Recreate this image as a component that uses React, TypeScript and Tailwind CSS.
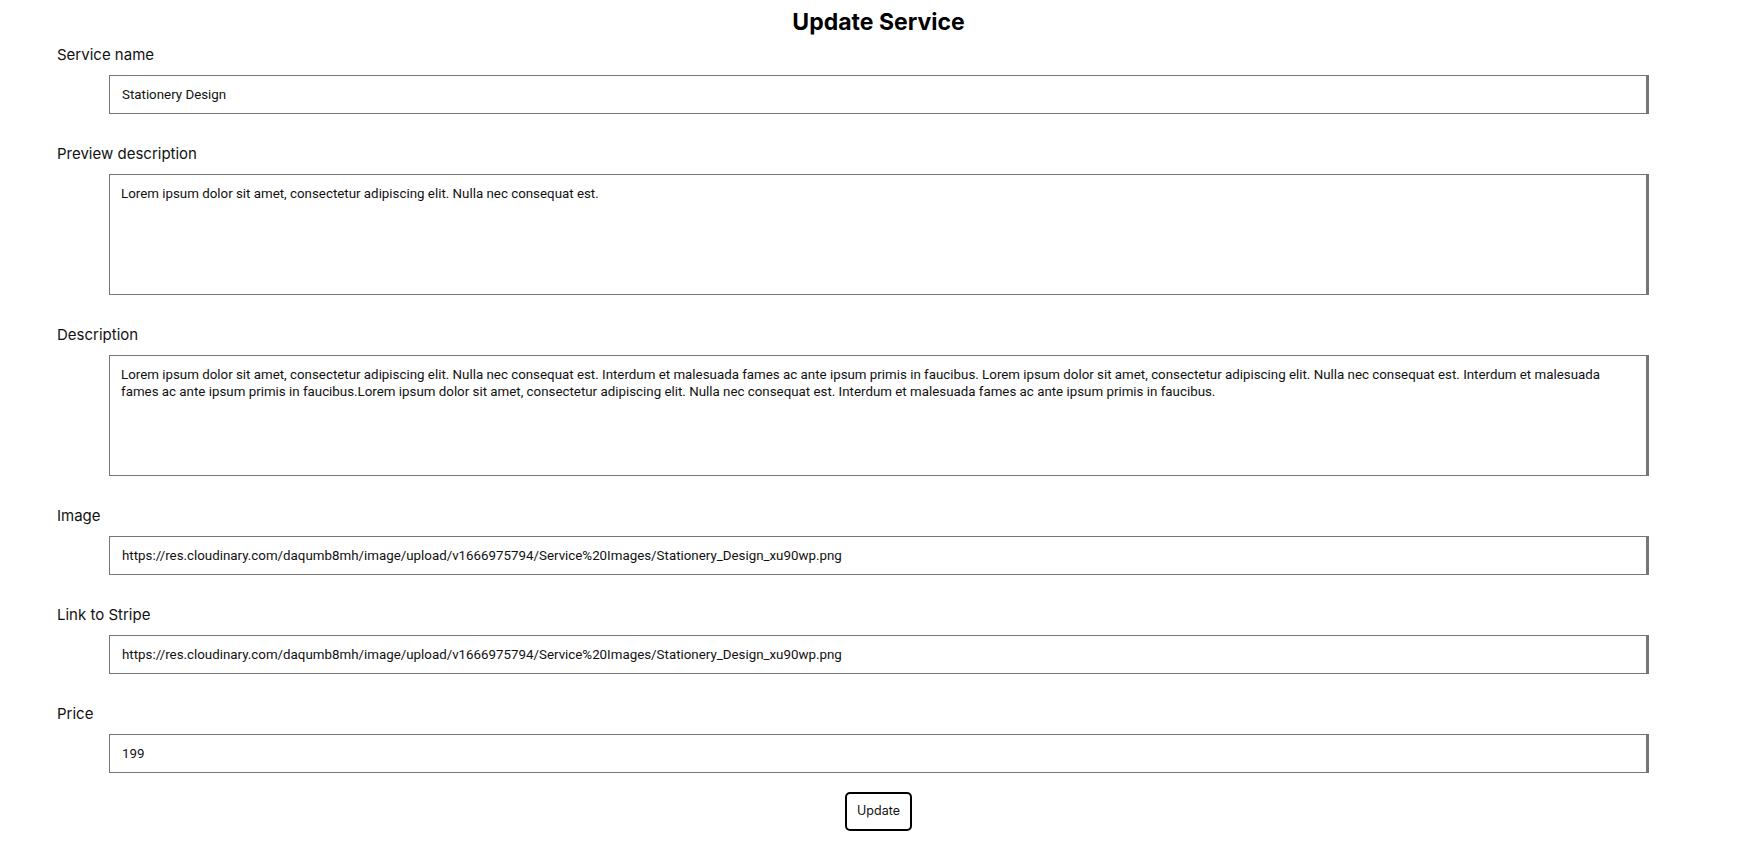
// Update Service form
const FIELDS = [
  { label: "Service name", value: "Stationery Design", area: false },
  {
    label: "Preview description",
    value: "Lorem ipsum dolor sit amet, consectetur adipiscing elit. Nulla nec consequat est.",
    area: true,
  },
  {
    label: "Description",
    value:
      "Lorem ipsum dolor sit amet, consectetur adipiscing elit. Nulla nec consequat est. Interdum et malesuada fames ac ante ipsum primis in faucibus. Lorem ipsum dolor sit amet, consectetur adipiscing elit. Nulla nec consequat est. Interdum et malesuada fames ac ante ipsum primis in faucibus.Lorem ipsum dolor sit amet, consectetur adipiscing elit. Nulla nec consequat est. Interdum et malesuada fames ac ante ipsum primis in faucibus.",
    area: true,
  },
  {
    label: "Image",
    value: "https://res.cloudinary.com/daqumb8mh/image/upload/v1666975794/Service%20Images/Stationery_Design_xu90wp.png",
    area: false,
  },
  {
    label: "Link to Stripe",
    value: "https://res.cloudinary.com/daqumb8mh/image/upload/v1666975794/Service%20Images/Stationery_Design_xu90wp.png",
    area: false,
  },
  { label: "Price", value: "199", area: false },
];

export default function App() {
  return (
    <div className="min-h-screen bg-white font-['Inter',sans-serif] text-black">
      <h1 className="pt-[7px] text-center text-[23px] font-bold leading-[30px]">Update Service</h1>
      <form className="flex flex-col px-[57px]" onSubmit={(e) => e.preventDefault()}>
        {FIELDS.map((f, i) => (
          <div key={f.label} className={i === 0 ? "mt-[6px]" : "mt-[28px]"}>
            <label className="block text-[15px] leading-[24px] text-[#111]">{f.label}</label>
            {f.area ? (
              <textarea
                readOnly
                value={f.value}
                className="ml-[52px] mt-[8px] block h-[121px] w-[1540px] resize-none border border-r-[3px] border-[#767676] px-[11px] pb-[12px] pt-[10px] font-['Roboto',sans-serif] text-[13.33px] leading-[17px] text-[#111] outline-none"
              />
            ) : (
              <input
                readOnly
                value={f.value}
                className="ml-[52px] mt-[8px] block h-[39px] w-[1540px] border border-r-[3px] border-[#767676] px-[12px] font-['Roboto',sans-serif] text-[13.33px] text-[#111] outline-none"
              />
            )}
          </div>
        ))}
        <div className="mt-[19px] flex justify-center">
          <button
            type="submit"
            className="h-[39px] w-[67px] rounded-[5px] border-2 border-black bg-white text-[12.5px] text-[#111]"
          >
            Update
          </button>
        </div>
      </form>
    </div>
  );
}
